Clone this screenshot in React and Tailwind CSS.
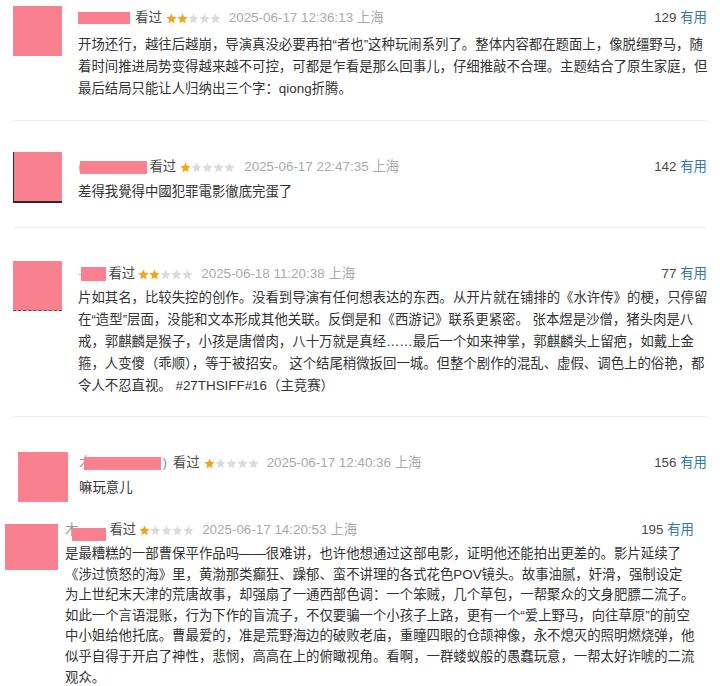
import React from 'react';

const font = { fontFamily: '"Liberation Sans", "Noto Sans CJK SC", sans-serif' };

function Stars({ n }) {
    return (
        <span className="flex items-center">
            {[0, 1, 2, 3, 4].map((i) => (
                <svg key={i} width="11" height="11" viewBox="0 0 24 24">
                    <polygon
                        points="12,1 15.3,8.3 23.2,9.1 17.2,14.5 19,22.6 12,18.4 5,22.6 6.8,14.5 0.8,9.1 8.7,8.3"
                        fill={i < n ? '#f6a41d' : '#dcdcdc'}
                    />
                </svg>
            ))}
        </span>
    );
}

function Review({ wrapCls, avatarCls, colCls, headCls, bodyCls, name, lookCls, starCls, dateCls, stars, date, votes, lines }) {
    return (
        <div className={'flex items-start ' + wrapCls}>
            <div className={'shrink-0 bg-[#f9818f] ' + avatarCls}></div>
            <div className={colCls}>
                <div className={'flex items-center h-[22px] text-[13.4px] ' + headCls}>
                    {name}
                    <span className={'text-[#494949] ' + lookCls}>看过</span>
                    <span className={starCls}>
                        <Stars n={stars} />
                    </span>
                    <span className={'text-[#aaaaaa] ' + dateCls}>{date} 上海</span>
                    <span className="ml-auto text-[#494949]">
                        {votes} <span className="text-[#3377aa]">有用</span>
                    </span>
                </div>
                <div className={'text-[13.4px] text-[#333333] ' + bodyCls}>
                    {lines.map((l, i) => (
                        <div key={i} className="whitespace-nowrap">{l}</div>
                    ))}
                </div>
            </div>
        </div>
    );
}

function Sep() {
    return <div className="mx-[13px] h-px bg-[#eeeeee]"></div>;
}

export default function App() {
    return (
        <div className="w-[720px] h-[686px] overflow-hidden bg-white" style={font}>
            <Review
                wrapCls="pt-[6px] pb-[20px]"
                avatarCls="ml-[13px] w-[49px] h-[50px]"
                colCls="ml-[16px] w-[629px]"
                headCls="mt-[1px]"
                bodyCls="mt-[5px] leading-[22px]"
                name={<span className="w-[52px] h-[12px] bg-[#f9818f]"></span>}
                lookCls="ml-[5px]"
                starCls="ml-[4px]"
                dateCls="ml-[8px]"
                stars={2}
                date="2025-06-17 12:36:13"
                votes="129"
                lines={[
                    '开场还行，越往后越崩，导演真没必要再拍“者也”这种玩闹系列了。整体内容都在题面上，像脱缰野马，随',
                    '着时间推进局势变得越来越不可控，可都是乍看是那么回事儿，仔细推敲不合理。主题结合了原生家庭，但',
                    '最后结局只能让人归纳出三个字：qiong折腾。',
                ]}
            />
            <Sep />
            <Review
                wrapCls="pt-[31px] pb-[24px]"
                avatarCls="ml-[13px] w-[49px] h-[51px] border-l border-b-2 border-[#2a2a2a]"
                colCls="ml-[16px] w-[629px]"
                headCls="mt-[4px]"
                bodyCls="mt-[3px] leading-[22px]"
                name={
                    <>
                        <span className="text-[#bbbbbb]">(</span>
                        <span className="ml-[-2px] w-[67px] h-[13px] bg-[#f9818f]"></span>
                    </>
                }
                lookCls="ml-[2px]"
                starCls="ml-[4px]"
                dateCls="ml-[9px]"
                stars={1}
                date="2025-06-17 22:47:35"
                votes="142"
                lines={['差得我覺得中國犯罪電影徹底完蛋了']}
            />
            <Sep />
            <Review
                wrapCls="pt-[33px] pb-[19px]"
                avatarCls="ml-[13px] w-[49px] h-[50px] border-b border-dashed border-[#555555]"
                colCls="ml-[16px] w-[629px]"
                headCls="mt-[2px]"
                bodyCls="mt-[2px] leading-[22px]"
                name={
                    <>
                        <span className="text-[#bbbbbb]">-</span>
                        <span className="ml-[-1px] w-[25px] h-[14px] bg-[#f9818f]"></span>
                    </>
                }
                lookCls="ml-[2px]"
                starCls="ml-[3px]"
                dateCls="ml-[8px]"
                stars={2}
                date="2025-06-18 11:20:38"
                votes="77"
                lines={[
                    '片如其名，比较失控的创作。没看到导演有任何想表达的东西。从开片就在铺排的《水许传》的梗，只停留',
                    '在“造型”层面，没能和文本形成其他关联。反倒是和《西游记》联系更紧密。 张本煜是沙僧，猪头肉是八',
                    '戒，郭麒麟是猴子，小孩是唐僧肉，八十万就是真经……最后一个如来神掌，郭麒麟头上留疤，如戴上金',
                    '箍，人变傻（乖顺），等于被招安。 这个结尾稍微扳回一城。但整个剧作的混乱、虚假、调色上的俗艳，都',
                    '令人不忍直视。 #27THSIFF#16（主竞赛）',
                ]}
            />
            <Sep />
            <Review
                wrapCls="pt-[35px]"
                avatarCls="ml-[18px] w-[50px] h-[50px]"
                colCls="ml-[11px] w-[628px]"
                headCls=""
                bodyCls="mt-[3px] leading-[22px]"
                name={
                    <>
                        <span className="text-[#999999]">木</span>
                        <span className="ml-[-8px] w-[77px] h-[13px] bg-[#f9818f]"></span>
                        <span className="ml-[1px] text-[#6b8fb8]">)</span>
                    </>
                }
                lookCls="ml-[6px]"
                starCls="ml-[4px]"
                dateCls="ml-[8px]"
                stars={1}
                date="2025-06-17 12:40:36"
                votes="156"
                lines={['嘛玩意儿']}
            />
            <Review
                wrapCls="pt-[17px]"
                avatarCls="ml-[5px] mt-[5px] w-[53px] h-[46px]"
                colCls="ml-[7px] w-[629px]"
                headCls=""
                bodyCls="mt-[3px] leading-[20.6px]"
                name={
                    <>
                        <span className="text-[#999999]">木</span>
                        <span className="ml-[-6px] mt-[8px] w-[34px] h-[13px] bg-[#f9818f]"></span>
                    </>
                }
                lookCls="ml-[3px]"
                starCls="ml-[3px]"
                dateCls="ml-[8px]"
                stars={1}
                date="2025-06-17 14:20:53"
                votes="195"
                lines={[
                    '是最糟糕的一部曹保平作品吗——很难讲，也许他想通过这部电影，证明他还能拍出更差的。影片延续了',
                    '《涉过愤怒的海》里，黄渤那类癫狂、躁郁、蛮不讲理的各式花色POV镜头。故事油腻，奸滑，强制设定',
                    '为上世纪末天津的荒唐故事，却强扇了一通西部色调：一个笨贼，几个草包，一帮聚众的文身肥膘二流子。',
                    '如此一个言语混账，行为下作的盲流子，不仅要骗一个小孩子上路，更有一个“爱上野马，向往草原”的前空',
                    '中小姐给他托底。曹最爱的，准是荒野海边的破败老庙，重瞳四眼的仓颉神像，永不熄灭的照明燃烧弹，他',
                    '似乎自得于开启了神性，悲悯，高高在上的俯瞰视角。看啊，一群蝼蚁般的愚蠢玩意，一帮太好诈唬的二流',
                    '观众。',
                ]}
            />
        </div>
    );
}
